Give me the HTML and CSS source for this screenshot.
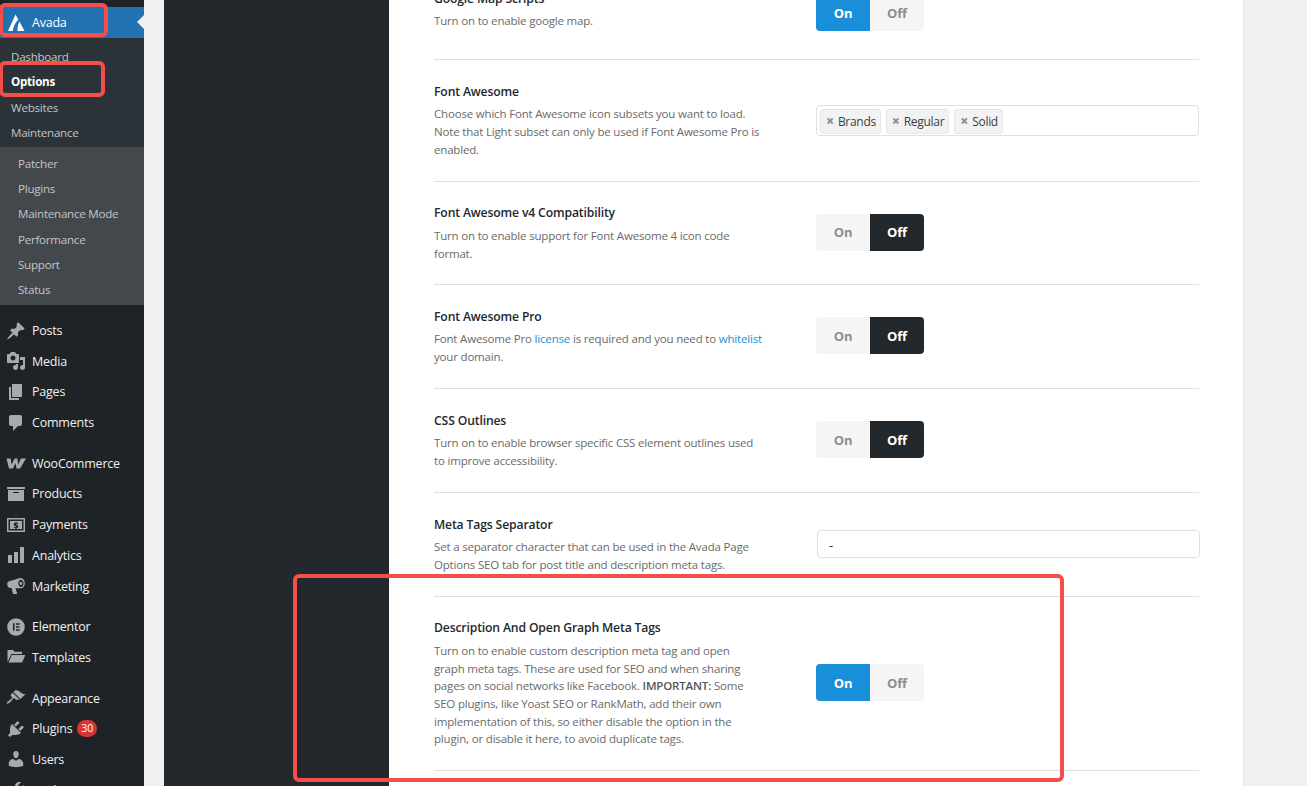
FILE: index.html
```html
<!DOCTYPE html>
<html lang="en">
<head>
<meta charset="utf-8">
<title>Avada Options</title>
<link rel="stylesheet" href="styles.css">
</head>
<body>
<div class="app">
  <nav class="sidebar">
    <a class="head-item"><svg class="ic" viewBox="0 0 20 20"><path class="white" d="M9.500 1.500 12.300 6.500C9.500 9.500 7.300 13.500 6.700 18H2z"/><path class="white" d="M13.500 8.500 18.500 18H11.500C11.300 14.500 12 11 13.500 8.500z"/></svg><span>Avada</span><i class="arrow"></i></a>
    <div class="sub">
      <a>Dashboard</a>
      <a class="cur">Options</a>
      <a>Websites</a>
      <a>Maintenance</a>
    </div>
    <div class="subsub">
      <a>Patcher</a>
      <a>Plugins</a>
      <a>Maintenance Mode</a>
      <a>Performance</a>
      <a>Support</a>
      <a>Status</a>
    </div>
    <div class="group">
      <a class="item"><svg class="ic" viewBox="0 0 20 20"><path d="M10.44 3.02l1.82-1.82 6.36 6.35-1.83 1.82c-1.05-.68-2.48-.57-3.41.36l-.75.75c-.92.93-1.04 2.35-.35 3.41l-1.83 1.82-2.41-2.41-2.8 2.79c-.42.42-3.38 2.71-3.8 2.29s1.86-3.39 2.28-3.81l2.79-2.79L4.1 9.36l1.83-1.82c1.05.69 2.48.57 3.4-.36l.75-.75c.93-.92 1.05-2.35.36-3.41z"/></svg><span>Posts</span></a>
      <a class="item"><svg class="ic" viewBox="0 0 20 20"><path fill-rule="evenodd" d="M13 11V4c0-.55-.45-1-1-1h-1.67L9 1H5L3.67 3H2c-.55 0-1 .45-1 1v7c0 .55.45 1 1 1h10c.55 0 1-.45 1-1zM7 4.5c1.38 0 2.5 1.12 2.5 2.5S8.38 9.5 7 9.5 4.5 8.38 4.5 7 5.62 4.5 7 4.5zM14 6h5v10.5c0 1.38-1.12 2.5-2.5 2.5S14 17.88 14 16.5s1.12-2.5 2.5-2.5c.17 0 .34.02.5.05V9h-3V6zm-4 8.05V13h2v3.5c0 1.38-1.12 2.5-2.5 2.5S7 17.88 7 16.5 8.12 14 9.5 14c.17 0 .34.02.5.05z"/></svg><span>Media</span></a>
      <a class="item"><svg class="ic" viewBox="0 0 20 20"><path d="M6 15V2h10v13H6zm-1 1h8v2H3V5h2v11z"/></svg><span>Pages</span></a>
      <a class="item"><svg class="ic" viewBox="0 0 20 20"><path d="M5 2h9c1.1 0 2 .9 2 2v7c0 1.1-.9 2-2 2h-2l-5 5v-5H5c-1.1 0-2-.9-2-2V4c0-1.1.9-2 2-2z"/></svg><span>Comments</span></a>
    </div>
    <div class="group">
      <a class="item"><svg class="ic" viewBox="0 0 20 20"><path d="M.5 5.500h4.200l.9 6.200 2.900-6.200h2.900l.8 6.200 2.700-6.200h5l-5.800 10h-3.600l-.9-5.400-2.700 5.400H3z"/></svg><span>WooCommerce</span></a>
      <a class="item"><svg class="ic" viewBox="0 0 20 20"><path fill-rule="evenodd" d="M19 3v2H1V3h18zM2 6h16v11H2V6zm11 3V8H7v1h6z"/></svg><span>Products</span></a>
      <a class="item"><svg class="ic" viewBox="0 0 20 20"><path fill-rule="evenodd" d="M1 3h18v14H1V3zm1.500 1.500v11h15v-11h-15zM4 6h12v8H4V6zm5.400 1v.8c-1 .1-1.700.8-1.700 1.600 0 1 .8 1.300 1.700 1.500.6.1.9.3.9.6 0 .3-.3.5-.8.5-.6 0-1.200-.2-1.600-.5l-.4 1c.4.3 1.200.5 1.900.6v.9h1.200v-.9c1-.2 1.700-.8 1.700-1.700 0-1-.8-1.400-1.700-1.600-.6-.1-.9-.3-.9-.5 0-.3.3-.4.7-.4.5 0 1 .1 1.400.4l.4-1c-.4-.2-1-.4-1.600-.5V7H9.400z"/></svg><span>Payments</span></a>
      <a class="item"><svg class="ic" viewBox="0 0 20 20"><path d="M18 18V2h-4v16h4zm-6 0V7H8v11h4zm-6 0v-8H2v8h4z"/></svg><span>Analytics</span></a>
      <a class="item"><svg class="ic" viewBox="0 0 20 20"><path fill-rule="evenodd" d="M14 2c2.800-.6 4.600 2 4.800 4.800.2 2.700-1 5-3.200 5.400-.4.1-.8.1-1.200 0H9.500l1.600 5.300c.1.3-.2.6-.5.6H7.400c-.3 0-.5-.2-.6-.5L5.700 12H4.200c-1.300 0-2.500-1.200-2.900-3-.3-1.700.2-3 1.200-3.500L12.300 2.600c.5-.3 1.100-.5 1.700-.6zm.6 1.700c-1.600.3-2.400 2.200-2.100 4.300.3 2 1.500 3.300 3 3 1.400-.3 2.200-2 2-4-.3-2.100-1.500-3.600-2.900-3.300zm.1 2c.9-.1 1.500.6 1.600 1.500.1 1-.3 1.700-1.100 1.800-.8.2-1.400-.5-1.600-1.500-.1-1 .3-1.700 1.100-1.800z"/></svg><span>Marketing</span></a>
    </div>
    <div class="group">
      <a class="item"><svg class="ic" viewBox="0 0 20 20"><path fill-rule="evenodd" d="M10 1.200a8.800 8.800 0 1 0 0 17.600 8.800 8.800 0 0 0 0-17.600zM7 6.300h1.500v7.400H7zM10 6.300h3.600v1.400H10zM10 9.300h3.600v1.400H10zM10 12.300h3.600v1.400H10z"/></svg><span>Elementor</span></a>
      <a class="item"><svg class="ic" viewBox="0 0 20 20"><path d="M1.500 3h5.500l1.500 1.800h7.500v2.200H5.300L1.900 14.500h-.4zM5.800 8h13.500l-3.200 7.500H2.600z"/></svg><span>Templates</span></a>
    </div>
    <div class="group">
      <a class="item"><svg class="ic" viewBox="0 0 20 20"><path d="M14.480 11.060L7.410 3.990l1.500-1.500c.5-.56 2.300-.47 3.510.32 1.210.8 1.430 1.280 2.910 2.100 1.180.64 2.450 1.260 4.450.85zm-.71.71L6.700 4.700 4.930 6.470c-.39.39-.39 1.020 0 1.410l1.060 1.060c.39.39.39 1.030 0 1.420-.6.6-1.430 1.110-2.210 1.690-.35.26-.7.53-1.010.84C1.430 13.230.4 14.850 1.050 15.500c.65.65 2.270-.38 3.610-1.720.31-.31.58-.66.84-1.010.58-.78 1.090-1.610 1.690-2.210.39-.39 1.030-.39 1.420 0l1.060 1.060c.39.39 1.020.39 1.410 0z"/></svg><span>Appearance</span></a>
      <a class="item"><svg class="ic" viewBox="0 0 20 20"><path d="M13.110 4.360L9.870 7.600 8 5.730l3.240-3.240c.35-.34 1.050-.2 1.560.32.52.51.66 1.210.31 1.550zm-8 1.770l.91-1.120 9.010 9.010-1.190.84c-.71.71-2.630 1.160-3.820 1.160H6.140L4.900 17.260c-.59.59-1.540.59-2.120 0-.59-.58-.59-1.530 0-2.120l1.240-1.240v-3.880c0-1.130.4-3.190 1.090-3.890zm7.260 3.970l3.240-3.240c.34-.35 1.040-.21 1.550.31.52.51.66 1.210.31 1.550l-3.240 3.250z"/></svg><span>Plugins</span><b class="badge">30</b></a>
      <a class="item"><svg class="ic" viewBox="0 0 20 20"><path d="M10 9.250c-2.270 0-2.730-3.440-2.730-3.440C7 4.020 7.820 2 9.970 2c2.160 0 2.980 2.020 2.710 3.810 0 0-.41 3.440-2.680 3.440zm0 2.570L12.720 10c2.390 0 4.520 2.330 4.520 4.530v2.490s-3.650 1.130-7.240 1.130c-3.650 0-7.240-1.130-7.240-1.130v-2.490c0-2.250 1.940-4.480 4.470-4.480z"/></svg><span>Users</span></a>
      <a class="item"><svg class="ic" viewBox="0 0 20 20"><path d="M16.680 9.770c-1.340 1.340-3.300 1.670-4.950.99l-5.410 6.520c-.99.99-2.590.99-3.580 0s-.99-2.590 0-3.580l6.520-5.420c-.68-1.650-.35-3.610.99-4.950 1.280-1.280 3.120-1.620 4.720-1.060l-2.890 2.890 2.820 2.820 2.860-2.870c.53 1.580.18 3.400-1.080 4.660z"/></svg><span>Tools</span></a>
    </div>
  </nav>

  <aside class="dark-panel"></aside>

  <main class="panel">
    <section class="row first">
      <div class="info">
        <h3>Google Map Scripts</h3>
        <p>Turn on to enable google map.</p>
      </div>
      <div class="control"><div class="toggle on"><span>On</span><span>Off</span></div></div>
    </section>
    <section class="row tall">
      <div class="info">
        <h3>Font Awesome</h3>
        <p>Choose which Font Awesome icon subsets you want to load.<br>Note that Light subset can only be used if Font Awesome Pro is<br>enabled.</p>
      </div>
      <div class="control">
        <div class="tags">
          <span class="tag"><i>×</i>Brands</span>
          <span class="tag"><i>×</i>Regular</span>
          <span class="tag"><i>×</i>Solid</span>
        </div>
      </div>
    </section>
    <section class="row compact">
      <div class="info">
        <h3>Font Awesome v4 Compatibility</h3>
        <p>Turn on to enable support for Font Awesome 4 icon code<br>format.</p>
      </div>
      <div class="control"><div class="toggle off"><span>On</span><span>Off</span></div></div>
    </section>
    <section class="row">
      <div class="info">
        <h3>Font Awesome Pro</h3>
        <p>Font Awesome Pro <a>license</a> is required and you need to <a>whitelist</a><br>your domain.</p>
      </div>
      <div class="control"><div class="toggle off"><span>On</span><span>Off</span></div></div>
    </section>
    <section class="row">
      <div class="info">
        <h3>CSS Outlines</h3>
        <p>Turn on to enable browser specific CSS element outlines used<br>to improve accessibility.</p>
      </div>
      <div class="control"><div class="toggle off"><span>On</span><span>Off</span></div></div>
    </section>
    <section class="row">
      <div class="info">
        <h3>Meta Tags Separator</h3>
        <p>Set a separator character that can be used in the Avada Page<br>Options SEO tab for post title and description meta tags.</p>
      </div>
      <div class="control shifted"><div class="text-input">-</div></div>
    </section>
    <section class="row large">
      <div class="info">
        <h3>Description And Open Graph Meta Tags</h3>
        <p>Turn on to enable custom description meta tag and open<br>graph meta tags. These are used for SEO and when sharing<br>pages on social networks like Facebook. <strong>IMPORTANT:</strong> Some<br>SEO plugins, like Yoast SEO or RankMath, add their own<br>implementation of this, so either disable the option in the<br>plugin, or disable it here, to avoid duplicate tags.</p>
      </div>
      <div class="control"><div class="toggle on"><span>On</span><span>Off</span></div></div>
    </section>
  </main>
</div>
<div class="mark mark-avada"></div>
<div class="mark mark-options"></div>
<div class="mark mark-desc"></div>
</body>
</html>
```

FILE: styles.css
```css
* { box-sizing: border-box; }
html, body { margin: 0; height: 786px; overflow: hidden; }
body { background: #f0f0f0; font-family: "Open Sans", "Noto Sans", sans-serif; font-size: 13px; color: #23282d; position: relative; }
.app { display: flex; height: 786px; overflow: hidden; }

.sidebar { width: 144px; flex: none; background: #1d2327; padding-top: 7px; color: #f0f0f1; font-size: 12.5px; letter-spacing: -0.22px; }
.sidebar a { display: block; }
.ic { width: 20px; height: 20px; flex: none; fill: #a7aaad; }
.ic .white { fill: #fff; }
.head-item { display: flex !important; align-items: center; gap: 6px; height: 31px; padding-left: 6px; background: #2271b1; color: #fff; position: relative; }
.arrow { position: absolute; right: 0; top: 8px; width: 0; height: 0; border: 7.5px solid transparent; border-right-color: #f0f0f1; border-left-width: 0; }
.sub { background: #2c3338; padding: 6px 0 2px 11px; color: #c3c4c7; font-size: 11.6px; letter-spacing: -0.25px; }
.sub a, .subsub a { height: 25.3px; line-height: 25.3px; }
.sub .cur { color: #fff; font-weight: 700; }
.subsub { height: 158px; background: #43484c; padding: 3.5px 0 0 18px; color: #c3c4c7; font-size: 11.6px; letter-spacing: -0.25px; }
.group { padding-top: 10px; }
.item { display: flex !important; align-items: center; gap: 6px; height: 30.7px; padding-left: 6px; }
.badge { margin-left: -1px; width: 20px; height: 17px; border-radius: 9px; background: #d63638; color: #fff; font-size: 10.5px; font-weight: 400; line-height: 17px; text-align: center; letter-spacing: 0; }

.dark-panel { width: 225px; margin-left: 20px; flex: none; background: #23282d; }
.panel { width: 855px; flex: none; background: #fff; padding: 0 44px 0 45px; border-right: 1px solid #e2e2e2; }
.row { display: flex; border-bottom: 1px solid #e0e0e0; align-items: center; height: 104px; }
.row.tall { height: 122px; }
.row.compact { height: 103px; }
.row.large { height: 174px; }
.row.first { height: 60px; align-items: flex-end; overflow: hidden; }
.first .info { padding-bottom: 29px; }
.first .control { align-self: flex-start; }
.first .toggle { margin-top: -6px; }
.info { width: 382px; flex: none; }
.info h3 { margin: -0.5px 0 3.5px; font-size: 12.2px; line-height: 20px; font-weight: 600; letter-spacing: -0.15px; color: #23282d; }
.info p { margin: 0; font-size: 11.5px; line-height: 17.7px; letter-spacing: -0.18px; color: #6a6a6a; }
.info p a { color: #198fd9; }
.info p strong { font-weight: 600; color: #555; }
.control { flex: 1; min-width: 0; }
.control.shifted { padding-left: 1px; margin-right: -1px; }

.toggle { display: flex; width: 108px; height: 37px; margin-top: -2px; border-radius: 4px; overflow: hidden; font-weight: 700; font-size: 13px; letter-spacing: -0.2px; }
.toggle span { flex: 1; display: flex; align-items: center; justify-content: center; background: #f5f5f5; color: #8e8e8e; }
.toggle.on span:first-child { background: #198fd9; color: #fff; }
.toggle.off span:last-child { background: #23282d; color: #fff; }

.tags { display: flex; gap: 5px; height: 31px; padding: 2.5px 3px; border: 1px solid #e0e0e0; border-radius: 4px; background: #fff; }
.tag { display: flex; align-items: center; height: 25px; padding: 0 4px 0 5px; background: #f3f2f2; border: 1px solid #e8e6e6; border-radius: 3px; font-size: 12px; letter-spacing: -0.3px; color: #3a3f44; }
.tag i { font-style: normal; font-weight: 800; color: #8e8e8e; margin-right: 4px; font-size: 14px; line-height: 1; }
.text-input { height: 28px; margin-top: -2px; line-height: 28px; padding-left: 11px; border: 1px solid #e0e0e0; border-radius: 4px; font-size: 13px; color: #23282d; background: #fff; }

.mark { position: absolute; border: 4px solid #f44f4b; border-radius: 6px; pointer-events: none; }
.mark-avada { left: -1px; top: 3px; width: 109px; height: 34px; }
.mark-options { left: -1px; top: 61px; width: 106px; height: 36px; }
.mark-desc { left: 293px; top: 574px; width: 771px; height: 208px; }
```
